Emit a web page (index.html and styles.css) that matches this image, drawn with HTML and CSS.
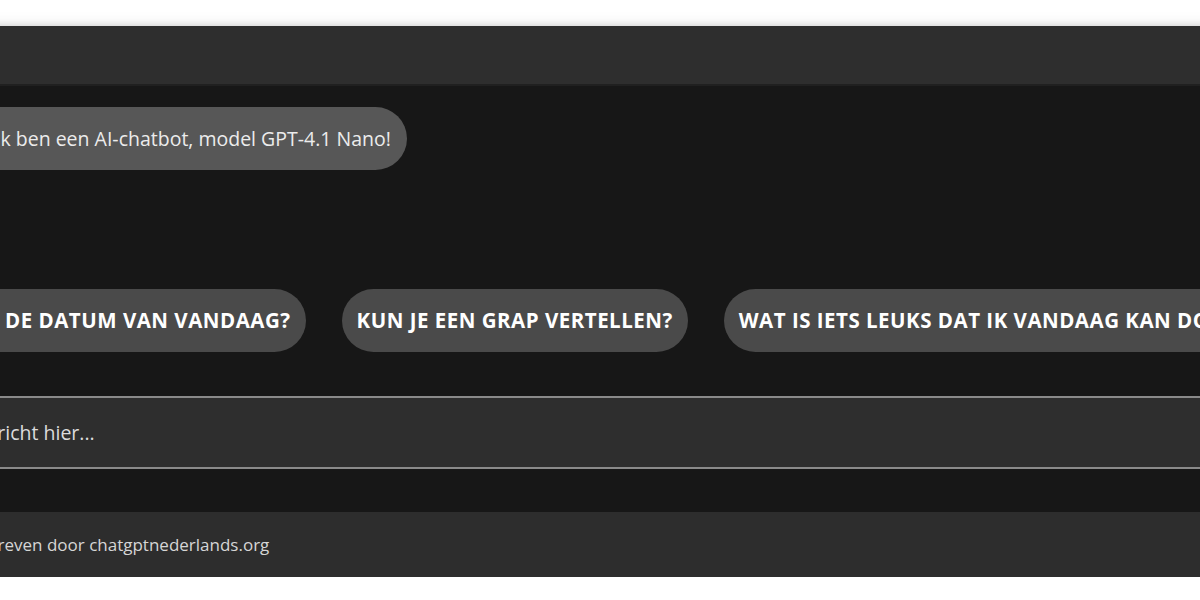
FILE: index.html
```html
<!DOCTYPE html>
<html lang="nl">
<head>
<meta charset="utf-8">
<title>Chatbot</title>
<link rel="stylesheet" href="styles.css">
</head>
<body>
<div class="app">
  <div class="header"></div>
  <div class="chat">
    <div class="messages">
      <div class="bubble">Hallo! Ik ben een AI-chatbot, model GPT-4.1 Nano!</div>
    </div>
    <div class="suggestions">
      <button class="chip">WAT IS DE DATUM VAN VANDAAG?</button>
      <button class="chip">KUN JE EEN GRAP VERTELLEN?</button>
      <button class="chip">WAT IS IETS LEUKS DAT IK VANDAAG KAN DOEN?</button>
    </div>
  </div>
  <div class="input-row">
    <input class="input" type="text" placeholder="Typ je bericht hier...">
  </div>
  <div class="spacer"></div>
  <div class="footer">Geschreven door chatgptnederlands.org</div>
</div>
</body>
</html>
```
FILE: styles.css
```css
html, body {
  margin: 0;
  padding: 0;
  background: #ffffff;
  overflow: hidden;
}
body {
  font-family: "Open Sans", "Noto Sans", sans-serif;
  padding-top: 26px;
}
.app {
  margin-left: -100px;
  width: 1400px;
  background: #171717;
  box-shadow: 0 6px 18px rgba(0, 0, 0, 0.24), 0 -2px 6px rgba(0, 0, 0, 0.08);
}
.header {
  height: 58px;
  background: #2e2e2e;
  border-bottom: 2px solid #202020;
}
.chat {
  display: flex;
  flex-direction: column;
  height: 310px;
  background: #171717;
}
.messages {
  flex: 1;
  padding: 21px 0 0 18px;
}
.bubble {
  display: inline-block;
  background: #575757;
  color: #ececec;
  font-size: 19.5px;
  line-height: 23px;
  padding: 20px 16px 20px 20px;
  border-radius: 32px;
}
.suggestions {
  display: flex;
  gap: 36px;
  padding: 0 0 44px 12px;
  white-space: nowrap;
}
.chip {
  flex: none;
  font-family: inherit;
  background: #4a4a4a;
  color: #ffffff;
  border: none;
  font-size: 20.5px;
  font-weight: 700;
  letter-spacing: 0.5px;
  line-height: 23px;
  padding: 20px 15px;
  border-radius: 32px;
}
.input-row {
  background: #2e2e2e;
  border-top: 2px solid #8a8a8a;
  border-bottom: 2px solid #8a8a8a;
}
.input {
  display: block;
  width: 100%;
  box-sizing: border-box;
  height: 69px;
  background: transparent;
  border: none;
  outline: none;
  font-family: inherit;
  font-size: 19.5px;
  color: #e6e6e6;
  padding: 0 0 0 16px;
}
.input::placeholder {
  color: #dcdcdc;
}
.spacer {
  height: 43px;
  background: #171717;
}
.footer {
  height: 65px;
  background: #2d2d2d;
  color: #d6d6d6;
  font-size: 17px;
  display: flex;
  align-items: center;
  padding-left: 49px;
}
```
